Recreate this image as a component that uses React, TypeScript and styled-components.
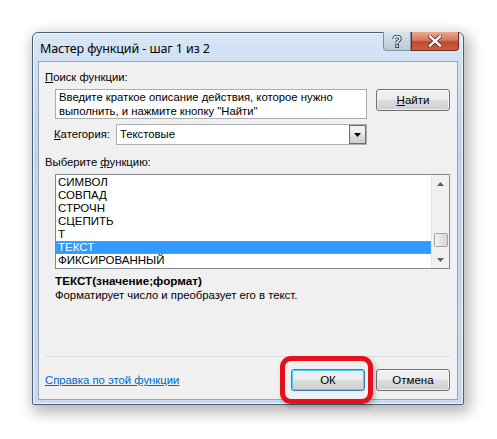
import React from "react";
import styled, { createGlobalStyle } from "styled-components";

const Global = createGlobalStyle`
  html, body { margin: 0; padding: 0; background: #ffffff; }
  body { font-family: "Liberation Sans", Arial, sans-serif; }
`;

const Page = styled.div`
  width: 497px;
  height: 439px;
  padding: 32px 0 0 32px;
  box-sizing: border-box;
  position: relative;
`;

const Window = styled.div`
  width: 432px;
  height: 373px;
  box-sizing: border-box;
  border: 1px solid #4f5d70;
  border-radius: 6px 6px 2px 2px;
  background: linear-gradient(180deg, #dbe8f6 0px, #cfe0f3 28px, #bfd5ee 120px, #c8dbf0 100%);
  box-shadow: 3px 5px 14px 3px rgba(0, 0, 0, 0.28), inset 0 0 0 1px rgba(255,255,255,0.7);
  padding: 0 5px 4px 5px;
  display: flex;
  flex-direction: column;
`;

const TitleBar = styled.div`
  height: 28px;
  display: flex;
  align-items: flex-start;
  justify-content: space-between;
`;

const Title = styled.div`
  font-family: "Noto Sans", sans-serif;
  font-size: 12.5px;
  color: #000;
  padding: 7px 0 0 2px;
  letter-spacing: -0.1px;
`;

const CaptionButtons = styled.div`
  display: flex;
  margin-right: -1px;
  margin-top: -1px;
`;

const CapButton = styled.div<{ $kind: "help" | "close" }>`
  height: 19px;
  width: ${(p) => (p.$kind === "help" ? "28px" : "48px")};
  box-sizing: border-box;
  border: 1px solid ${(p) => (p.$kind === "help" ? "#7f8ea3" : "#6b2d22")};
  border-top: none;
  border-radius: ${(p) => (p.$kind === "help" ? "0 0 0 4px" : "0 0 4px 0")};
  background: ${(p) =>
    p.$kind === "help"
      ? "linear-gradient(180deg, #d9e4ef 0%, #c9d6e2 50%, #bccbd4 100%)"
      : "linear-gradient(180deg, #e9a990 0%, #d77a5e 45%, #c0492c 55%, #c95f3f 100%)"};
  display: flex;
  align-items: center;
  justify-content: center;
`;

const Panel = styled.div`
  flex: 1;
  background: #f0f0f0;
  border: 1px solid #97a7bb;
  display: flex;
  flex-direction: column;
  padding: 0 7px 0 6px;
  font-family: "Liberation Sans", Arial, sans-serif;
  font-size: 11.3px;
  color: #000;
`;

const Label = styled.div<{ $top: number }>`
  margin-top: ${(p) => p.$top}px;
  line-height: 15px;
  height: 15px;
  white-space: nowrap;
`;

const U = styled.span`
  text-decoration: underline;
`;

const Row = styled.div<{ $top: number }>`
  margin-top: ${(p) => p.$top}px;
  margin-left: 10px;
  display: flex;
  align-items: flex-start;
`;

const SearchBox = styled.div`
  width: 312px;
  height: 30px;
  box-sizing: border-box;
  border: 1px solid #abadb3;
  background: #fff;
  padding: 1px 0 0 3px;
  line-height: 13.5px;
  white-space: nowrap;
  overflow: hidden;
`;

const Gap = styled.div<{ $w: number }>`
  width: ${(p) => p.$w}px;
  flex: none;
`;

const Button = styled.div<{ $focused?: boolean }>`
  width: 74px;
  height: 22px;
  box-sizing: border-box;
  border: 1px solid ${(p) => (p.$focused ? "#3c7fb1" : "#707070")};
  border-radius: 3px;
  background: linear-gradient(180deg, #f2f2f2 0%, #ebebeb 48%, #dddddd 52%, #cfcfcf 100%);
  box-shadow: inset 0 0 0 1px ${(p) => (p.$focused ? "#48d5fd" : "rgba(255,255,255,0.6)")};
  display: flex;
  align-items: center;
  justify-content: center;
  font-size: 11.5px;
  line-height: 14px;
`;

const CategoryLabel = styled.div`
  width: 62px;
  line-height: 21px;
  margin-left: -1px;
  white-space: nowrap;
`;

const Select = styled.div`
  width: 251px;
  height: 21px;
  box-sizing: border-box;
  border: 1px solid #abadb3;
  background: #fff;
  display: flex;
  align-items: stretch;
`;

const SelectValue = styled.div`
  flex: 1;
  padding-left: 3px;
  line-height: 19px;
`;

const SelectArrow = styled.div`
  width: 17px;
  box-sizing: border-box;
  border: 1px solid #707070;
  background: linear-gradient(180deg, #f2f2f2 0%, #ebebeb 48%, #dddddd 52%, #cfcfcf 100%);
  display: flex;
  align-items: center;
  justify-content: center;
`;

const ListBox = styled.div`
  width: 395px;
  height: 95px;
  box-sizing: border-box;
  border: 1px solid #828790;
  background: #fff;
  display: flex;
`;

const Items = styled.div`
  flex: 1;
  padding-top: 1px;
  font-family: "Liberation Sans", Arial, sans-serif;
  font-size: 11.5px;
`;

const Item = styled.div<{ $selected?: boolean }>`
  height: 13px;
  line-height: 13px;
  padding-left: 2px;
  box-sizing: border-box;
  background: ${(p) => (p.$selected ? "#3399ff" : "transparent")};
  color: ${(p) => (p.$selected ? "#fff" : "#000")};
  outline: ${(p) => (p.$selected ? "1px dotted #e08a2a" : "none")};
  outline-offset: -1px;
`;

const ScrollBar = styled.div`
  width: 17px;
  background: #f0f0f0;
  border-left: 1px solid #e6e6e6;
  display: flex;
  flex-direction: column;
  align-items: center;
`;

const ScrollArrow = styled.div`
  height: 17px;
  width: 17px;
  display: flex;
  align-items: center;
  justify-content: center;
`;

const ScrollTrack = styled.div`
  flex: 1;
  width: 100%;
  display: flex;
  flex-direction: column;
  justify-content: flex-end;
  align-items: center;
`;

const Thumb = styled.div`
  width: 14px;
  height: 14px;
  box-sizing: border-box;
  border: 1px solid #a6a6a6;
  border-radius: 2px;
  background: linear-gradient(90deg, #f4f4f4 0%, #e3e3e3 50%, #d6d6d6 100%);
  margin-bottom: 4px;
`;

const Signature = styled.div`
  margin-top: 4px;
  margin-left: 10px;
  line-height: 15px;
  font-family: "Liberation Sans", Arial, sans-serif;
  font-weight: bold;
  font-size: 11.7px;
`;

const Description = styled.div`
  margin-left: 10px;
  line-height: 15px;
  font-family: "Liberation Sans", Arial, sans-serif;
  font-size: 11.3px;
`;

const Spacer = styled.div`
  flex: 1;
`;

const Separator = styled.div`
  height: 1px;
  background: #d5dfe5;
  margin-bottom: 12px;
`;

const Footer = styled.div`
  display: flex;
  align-items: center;
  height: 22px;
  margin-bottom: 8px;
`;

const HelpLink = styled.a`
  color: #0066cc;
  text-decoration: underline;
  font-size: 11.3px;
  flex: 1;
`;

const Highlight = styled.div`
  position: absolute;
  left: 280px;
  top: 356px;
  width: 93px;
  height: 48px;
  box-sizing: border-box;
  border: 5px solid #e5101c;
  border-radius: 11px;
  box-shadow: 2px 3px 5px rgba(0, 0, 0, 0.25);
`;

const items = ["СИМВОЛ", "СОВПАД", "СТРОЧН", "СЦЕПИТЬ", "Т", "ТЕКСТ", "ФИКСИРОВАННЫЙ"];

export default function App() {
  return (
    <>
      <Global />
      <Page>
        <Window>
          <TitleBar>
            <Title>Мастер функций - шаг 1 из 2</Title>
            <CaptionButtons>
              <CapButton $kind="help">
                <svg width="10" height="13" viewBox="0 0 10 13">
                  <path d="M2 4 Q2 1.5 5 1.5 Q8 1.5 8 4 Q8 5.5 5.5 6.5 L5 8.5" fill="none" stroke="#3a4858" strokeWidth="3.4" />
                  <path d="M2 4 Q2 1.5 5 1.5 Q8 1.5 8 4 Q8 5.5 5.5 6.5 L5 8.5" fill="none" stroke="#f4f6f8" strokeWidth="1.5" />
                  <rect x="3.7" y="9.7" width="2.8" height="2.8" fill="#f4f6f8" stroke="#3a4858" strokeWidth="1" />
                </svg>
              </CapButton>
              <CapButton $kind="close">
                <svg width="14" height="12" viewBox="0 0 14 12">
                  <path d="M2 1.5 L12 10.5 M12 1.5 L2 10.5" stroke="#5a2418" strokeWidth="4" strokeLinecap="square" />
                  <path d="M2 1.5 L12 10.5 M12 1.5 L2 10.5" stroke="#ffffff" strokeWidth="2.4" strokeLinecap="square" />
                </svg>
              </CapButton>
            </CaptionButtons>
          </TitleBar>
          <Panel>
            <Label $top={8}>
              <U>П</U>оиск функции:
            </Label>
            <Row $top={4}>
              <SearchBox>
                Введите краткое описание действия, которое нужно
                <br />
                выполнить, и нажмите кнопку "Найти"
              </SearchBox>
              <Gap $w={9} />
              <Button>
                <U>Н</U>айти
              </Button>
            </Row>
            <Row $top={5}>
              <CategoryLabel>
                <U>К</U>атегория:
              </CategoryLabel>
              <Select>
                <SelectValue>Текстовые</SelectValue>
                <SelectArrow>
                  <svg width="7" height="4" viewBox="0 0 7 4">
                    <path d="M0 0 H7 L3.5 4 Z" fill="#000" />
                  </svg>
                </SelectArrow>
              </Select>
            </Row>
            <Label $top={10}>
              Выберите <U>ф</U>ункцию:
            </Label>
            <Row $top={4}>
              <ListBox>
                <Items>
                  {items.map((it) => (
                    <Item key={it} $selected={it === "ТЕКСТ"}>
                      {it}
                    </Item>
                  ))}
                </Items>
                <ScrollBar>
                  <ScrollArrow>
                    <svg width="7" height="4" viewBox="0 0 7 4">
                      <path d="M3.5 0 L7 4 H0 Z" fill="#606060" />
                    </svg>
                  </ScrollArrow>
                  <ScrollTrack>
                    <Thumb />
                  </ScrollTrack>
                  <ScrollArrow>
                    <svg width="7" height="4" viewBox="0 0 7 4">
                      <path d="M0 0 H7 L3.5 4 Z" fill="#606060" />
                    </svg>
                  </ScrollArrow>
                </ScrollBar>
              </ListBox>
            </Row>
            <Signature>ТЕКСТ(значение;формат)</Signature>
            <Description>Форматирует число и преобразует его в текст.</Description>
            <Spacer />
            <Separator />
            <Footer>
              <HelpLink>Справка по этой функции</HelpLink>
              <Button $focused>ОК</Button>
              <Gap $w={11} />
              <Button>Отмена</Button>
            </Footer>
          </Panel>
        </Window>
        <Highlight />
      </Page>
    </>
  );
}
